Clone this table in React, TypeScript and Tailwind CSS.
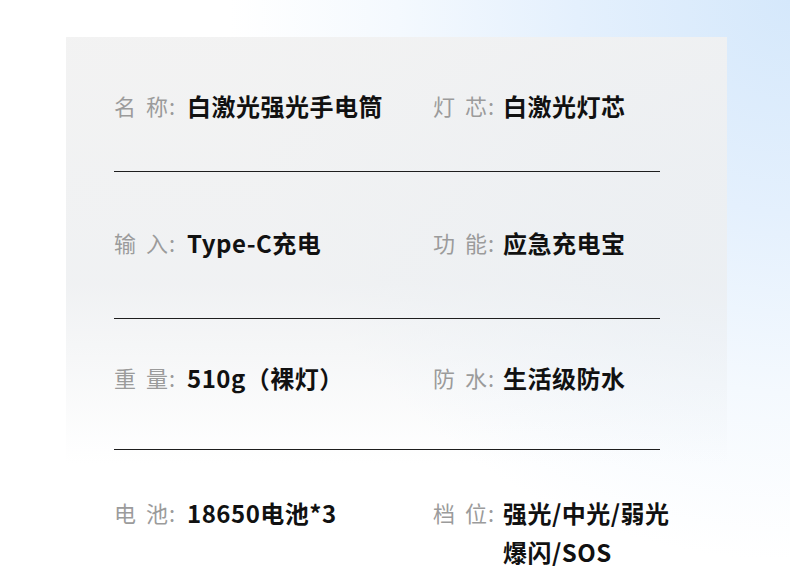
import React from "react";

type Spec = { label: [string, string]; value: React.ReactNode };

const rows: { height: string; pad: string; border: boolean; items: Spec[] }[] = [
  {
    height: "h-[135px]",
    pad: "pt-[49px]",
    border: true,
    items: [
      { label: ["名", "称"], value: "白激光强光手电筒" },
      { label: ["灯", "芯"], value: "白激光灯芯" },
    ],
  },
  {
    height: "h-[147px]",
    pad: "pt-[51px]",
    border: true,
    items: [
      { label: ["输", "入"], value: "Type-C充电" },
      { label: ["功", "能"], value: "应急充电宝" },
    ],
  },
  {
    height: "h-[131px]",
    pad: "pt-[39px]",
    border: true,
    items: [
      { label: ["重", "量"], value: "510g（裸灯）" },
      { label: ["防", "水"], value: "生活级防水" },
    ],
  },
  {
    height: "h-[135px]",
    pad: "pt-[43px]",
    border: false,
    items: [
      { label: ["电", "池"], value: "18650电池*3" },
      {
        label: ["档", "位"],
        value: (
          <>
            强光/中光/弱光
            <br />
            爆闪/SOS
          </>
        ),
      },
    ],
  },
];

const SpecItem = ({ item, left }: { item: Spec; left: boolean }) => (
  <div className={`flex shrink-0 items-start ${left ? "w-[319px]" : "w-[227px]"}`}>
    <div
      className={`flex shrink-0 text-[22px] leading-[39px] text-[#9b9b9b] ${
        left ? "w-[73px]" : "w-[70px]"
      }`}
    >
      <span>{item.label[0]}</span>
      <span className="ml-[10px]">{item.label[1]}</span>
      <span className="ml-[1px]">:</span>
    </div>
    <div className="whitespace-nowrap text-[24px] font-bold leading-[39px] tracking-[0.5px] text-[#111111]">
      {item.value}
    </div>
  </div>
);

export default function App() {
  return (
    <div
      className="relative h-[585px] w-[790px] overflow-hidden bg-[radial-gradient(ellipse_560px_560px_at_100%_0%,#d5e8fb_0%,#e4f0fd_38%,#f4f9fe_70%,#ffffff_100%)] pt-[37px]"
      style={{ fontFamily: '"Noto Sans CJK SC", "Noto Sans", sans-serif' }}
    >
      <div className="ml-[66px] h-[548px] w-[661px] bg-[linear-gradient(180deg,rgba(241,241,241,0.9)_0%,rgba(236,238,240,0.8)_45%,rgba(255,255,255,0)_78%)] pl-[48px] pr-[67px]">
        {rows.map((row, i) => (
          <div
            key={i}
            className={`flex ${row.height} ${row.pad} ${
              row.border ? "border-b border-[#1e1e1e]" : ""
            }`}
          >
            <SpecItem item={row.items[0]} left />
            <SpecItem item={row.items[1]} left={false} />
          </div>
        ))}
      </div>
    </div>
  );
}
